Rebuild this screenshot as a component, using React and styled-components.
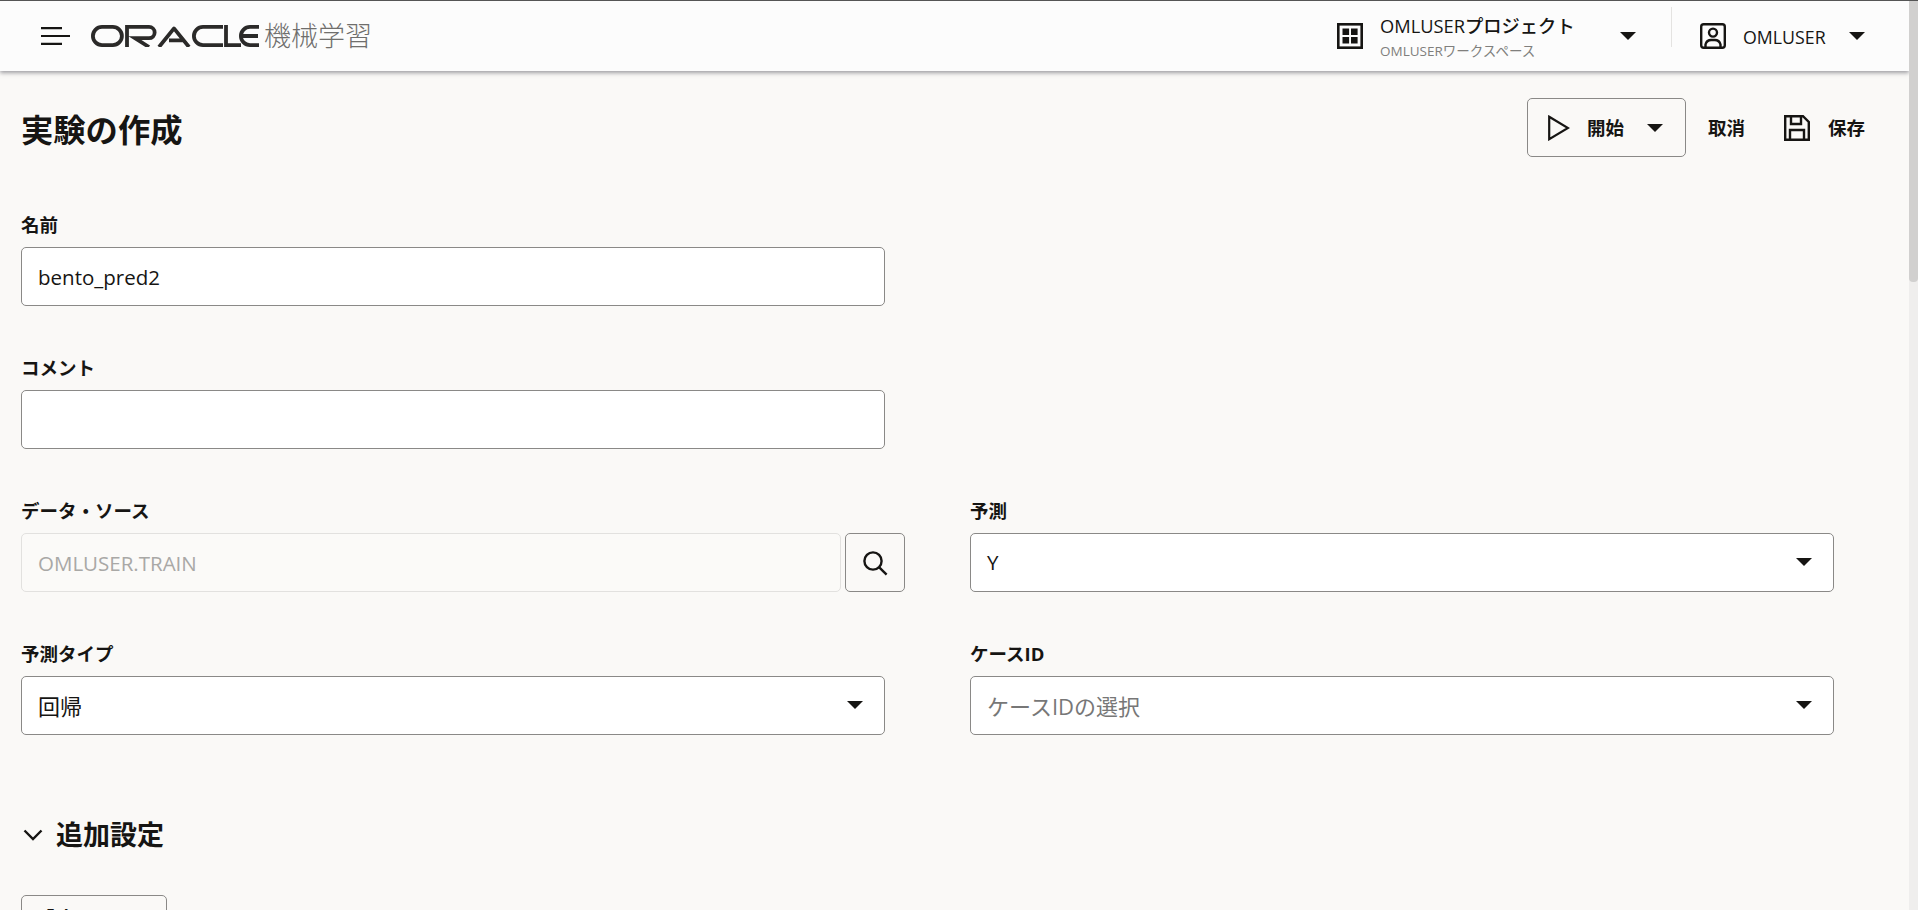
import styled, { createGlobalStyle } from 'styled-components';

const GlobalStyle = createGlobalStyle`
  html, body {
    margin: 0;
    padding: 0;
    height: 100%;
    overflow: hidden;
  }
  body {
    font-family: "Open Sans", "Noto Sans CJK JP", sans-serif;
    color: #161513;
  }
  * {
    box-sizing: border-box;
  }
`;

const Frame = styled.div`
  display: flex;
  height: 910px;
  border-top: 1px solid #555;
`;

const Shell = styled.div`
  flex: 1;
  min-width: 0;
  overflow: hidden;
  background: #faf9f7;
`;

const ScrollTrack = styled.div`
  flex-shrink: 0;
  width: 9px;
  background: #efeeed;
`;

const ScrollThumb = styled.div`
  height: 281px;
  background: #d1d0cf;
  border-radius: 0 0 4px 4px;
`;

const Header = styled.header`
  position: relative;
  z-index: 2;
  display: flex;
  align-items: center;
  justify-content: space-between;
  height: 70px;
  padding: 0 44px 0 41px;
  background: #fcfcfc;
  box-shadow: 0 2px 4px rgba(70, 70, 80, 0.5);
`;

const Brand = styled.div`
  display: flex;
  align-items: center;
`;

const Logo = styled.svg`
  display: block;
  width: 168px;
  height: 22px;
  margin-left: 21px;
`;

const ProductName = styled.span`
  margin-left: 5px;
  font-size: 27px;
  font-weight: 300;
  line-height: 36px;
  color: #6f6e6c;
`;

const HeaderRight = styled.div`
  display: flex;
  align-items: center;
`;

const IconSlot = styled.svg`
  display: block;
  flex-shrink: 0;
  width: 26px;
  height: 26px;
`;

const Workspace = styled.div`
  width: 240px;
  margin: 1px 0 0 17px;
`;

const WorkspaceTitle = styled.div`
  font-size: 18.3px;
  font-weight: 500;
  line-height: 24px;
`;

const WorkspaceSub = styled.div`
  font-size: 13.5px;
  line-height: 18px;
  color: #807f7d;
  margin-top: 4px;
`;

const Caret = styled.span`
  display: block;
  flex-shrink: 0;
  width: 0;
  height: 0;
  border-left: 8px solid transparent;
  border-right: 8px solid transparent;
  border-top: 8px solid #161513;
`;

const Divider = styled.span`
  display: block;
  width: 1px;
  height: 40px;
  margin: -18px 28px 0 35px;
  background: #e4e3e1;
`;

const UserName = styled.span`
  width: 106px;
  margin: 2px 0 0 17px;
  font-size: 17.8px;
  font-weight: 500;
  line-height: 24px;
`;

const Page = styled.main`
  padding: 27px 44px 0 21px;
`;

const TitleRow = styled.div`
  display: flex;
  align-items: center;
  justify-content: space-between;
  height: 59px;
  margin-bottom: 56px;
`;

const Title = styled.h1`
  margin: 3px 0 0;
  font-size: 32.3px;
  font-weight: 700;
  line-height: 40px;
`;

const Actions = styled.div`
  display: flex;
  align-items: center;
`;

const StartButton = styled.button`
  display: flex;
  align-items: center;
  width: 159px;
  height: 59px;
  padding: 0 20px;
  background: transparent;
  border: 1px solid #8a8987;
  border-radius: 5px;
  font: inherit;
  color: inherit;
`;

const ActionLabel = styled.span`
  font-size: 18.5px;
  font-weight: 700;
  line-height: 24px;
  margin-left: ${(props) => props.$offset || 0}px;
`;

const StartCaret = styled(Caret)`
  margin-left: 23px;
`;

const SaveIcon = styled(IconSlot)`
  margin-left: 39px;
`;

const FormGrid = styled.div`
  display: grid;
  grid-template-columns: 884px 864px;
  column-gap: 65px;
  row-gap: 50px;
`;

const Field = styled.div`
  grid-column: ${(props) => (props.$right ? 2 : 1)};
  width: ${(props) => (props.$wide ? '884px' : '864px')};
`;

const Label = styled.label`
  display: block;
  height: 24px;
  margin-bottom: 10px;
  font-size: 18.5px;
  font-weight: 700;
  line-height: 24px;
`;

const InputRow = styled.div`
  display: flex;
  gap: 4px;
`;

const TextBox = styled.input`
  display: block;
  flex: 1;
  width: 100%;
  height: 59px;
  padding: 0 16px;
  background: ${(props) => (props.disabled ? '#fbfaf8' : '#fff')};
  border: 1px solid ${(props) => (props.disabled ? '#e2e1df' : '#8a8987')};
  border-radius: 5px;
  outline: none;
  font-family: inherit;
  font-size: 20.5px;
  color: #161513;
  &:disabled {
    color: #a9a8a6;
    opacity: 1;
  }
`;

const SearchButton = styled.button`
  display: flex;
  flex-shrink: 0;
  align-items: center;
  justify-content: center;
  width: 60px;
  height: 59px;
  padding: 0;
  background: transparent;
  border: 1px solid #8a8987;
  border-radius: 5px;
`;

const SelectBox = styled.div`
  display: flex;
  align-items: center;
  justify-content: space-between;
  height: 59px;
  padding: 0 21px 2px 16px;
  background: #fff;
  border: 1px solid #8a8987;
  border-radius: 5px;
  font-size: ${(props) => props.$size || 22}px;
  color: ${(props) => (props.$placeholder ? '#777' : '#161513')};
`;

const SectionHeading = styled.h2`
  display: flex;
  align-items: center;
  height: 36px;
  margin: 82px 0 42px;
  font-size: 27px;
  font-weight: 700;
  line-height: 36px;
`;

const Chevron = styled.svg`
  display: block;
  width: 20px;
  height: 12px;
  margin: 0 13px 0 2px;
`;

const ResetButton = styled.button`
  display: block;
  width: 146px;
  height: 43px;
  padding: 0;
  background: transparent;
  border: 1px solid #8a8987;
  border-radius: 5px;
  font: inherit;
  font-size: 18.5px;
  font-weight: 700;
  color: inherit;
`;

function OracleLogo() {
  return (
    <Logo viewBox="0 0 168 22" fill="none" stroke="#2b2a29" strokeWidth="3.8">
      <rect x="1.9" y="1.9" width="29" height="18.2" rx="9.1" />
      <path d="M36 22V1.9H58a5.6 5.6 0 0 1 0 11.3H44L58 22" />
      <path d="M68 22 83 3.4 98 22M78 15.4H92" strokeLinejoin="round" />
      <path d="M132 1.9H112a9.1 9.1 0 0 0 0 18.2H132" />
      <path d="M135 0V20.1H150" />
      <path d="M168 1.9H159a9.1 9.1 0 0 0 0 18.2H168M151 11H167" />
    </Logo>
  );
}

function MenuIcon() {
  return (
    <svg width="29" height="18" viewBox="0 0 29 18" stroke="#161513" strokeWidth="2.2">
      <path d="M0 1.2H21M0 9H29M0 16.8H21" />
    </svg>
  );
}

function App() {
  return (
    <>
      <GlobalStyle />
      <Frame>
        <Shell>
          <Header>
            <Brand>
              <MenuIcon />
              <OracleLogo />
              <ProductName>機械学習</ProductName>
            </Brand>
            <HeaderRight>
              <IconSlot viewBox="0 0 26 26" fill="none">
                <rect x="1.3" y="1.3" width="23.4" height="23.4" stroke="#161513" strokeWidth="2.6" />
                <path fill="#161513" d="M5.5 5.5h6.6v6.6H5.5zM14 5.5h6.6v6.6H14zM5.5 14h6.6v6.6H5.5zM14 14h6.6v6.6H14z" />
              </IconSlot>
              <Workspace>
                <WorkspaceTitle>OMLUSERプロジェクト</WorkspaceTitle>
                <WorkspaceSub>OMLUSERワークスペース</WorkspaceSub>
              </Workspace>
              <Caret />
              <Divider />
              <IconSlot viewBox="0 0 26 26" fill="none" stroke="#161513" strokeWidth="2.4">
                <rect x="1.2" y="1.2" width="23.6" height="23.6" rx="2.5" />
                <circle cx="13" cy="9.6" r="4" />
                <path d="M5.5 24.5v-3a6 6 0 0 1 6-4.5h3a6 6 0 0 1 6 4.5v3" />
              </IconSlot>
              <UserName>OMLUSER</UserName>
              <Caret />
            </HeaderRight>
          </Header>

          <Page>
            <TitleRow>
              <Title>実験の作成</Title>
              <Actions>
                <StartButton>
                  <svg width="22" height="26" viewBox="0 0 22 26" fill="none" stroke="#161513" strokeWidth="2.2">
                    <path d="M1.2 1.8 20 13 1.2 24.2Z" />
                  </svg>
                  <ActionLabel $offset={17}>開始</ActionLabel>
                  <StartCaret />
                </StartButton>
                <ActionLabel $offset={22}>取消</ActionLabel>
                <SaveIcon viewBox="0 0 26 26" fill="none" stroke="#161513" strokeWidth="2.4">
                  <path d="M1.2 1.2H19L24.8 7V24.8H1.2Z" />
                  <path d="M7 1.2V9H17V1.2M6 24.8V15H20V24.8" />
                </SaveIcon>
                <ActionLabel $offset={18}>保存</ActionLabel>
              </Actions>
            </TitleRow>

            <FormGrid>
              <Field>
                <Label>名前</Label>
                <TextBox readOnly value="bento_pred2" />
              </Field>
              <Field>
                <Label>コメント</Label>
                <TextBox readOnly value="" />
              </Field>
              <Field $wide>
                <Label>データ・ソース</Label>
                <InputRow>
                  <TextBox disabled value="OMLUSER.TRAIN" />
                  <SearchButton>
                    <svg width="26" height="26" viewBox="0 0 26 26" fill="none" stroke="#161513" strokeWidth="2.4">
                      <circle cx="11" cy="11" r="8.6" />
                      <path d="M17 17.2 24.6 24.6" />
                    </svg>
                  </SearchButton>
                </InputRow>
              </Field>
              <Field $right>
                <Label>予測</Label>
                <SelectBox $size={20.5}>
                  Y
                  <Caret />
                </SelectBox>
              </Field>
              <Field>
                <Label>予測タイプ</Label>
                <SelectBox>
                  回帰
                  <Caret />
                </SelectBox>
              </Field>
              <Field $right>
                <Label>ケースID</Label>
                <SelectBox $placeholder>
                  ケースIDの選択
                  <Caret />
                </SelectBox>
              </Field>
            </FormGrid>

            <SectionHeading>
              <Chevron viewBox="0 0 20 12" fill="none" stroke="#161513" strokeWidth="2.4">
                <path d="M1.5 1.5 10 10 18.5 1.5" />
              </Chevron>
              追加設定
            </SectionHeading>
            <ResetButton>設定リセット</ResetButton>
          </Page>
        </Shell>
        <ScrollTrack>
          <ScrollThumb />
        </ScrollTrack>
      </Frame>
    </>
  );
}

export default App;
